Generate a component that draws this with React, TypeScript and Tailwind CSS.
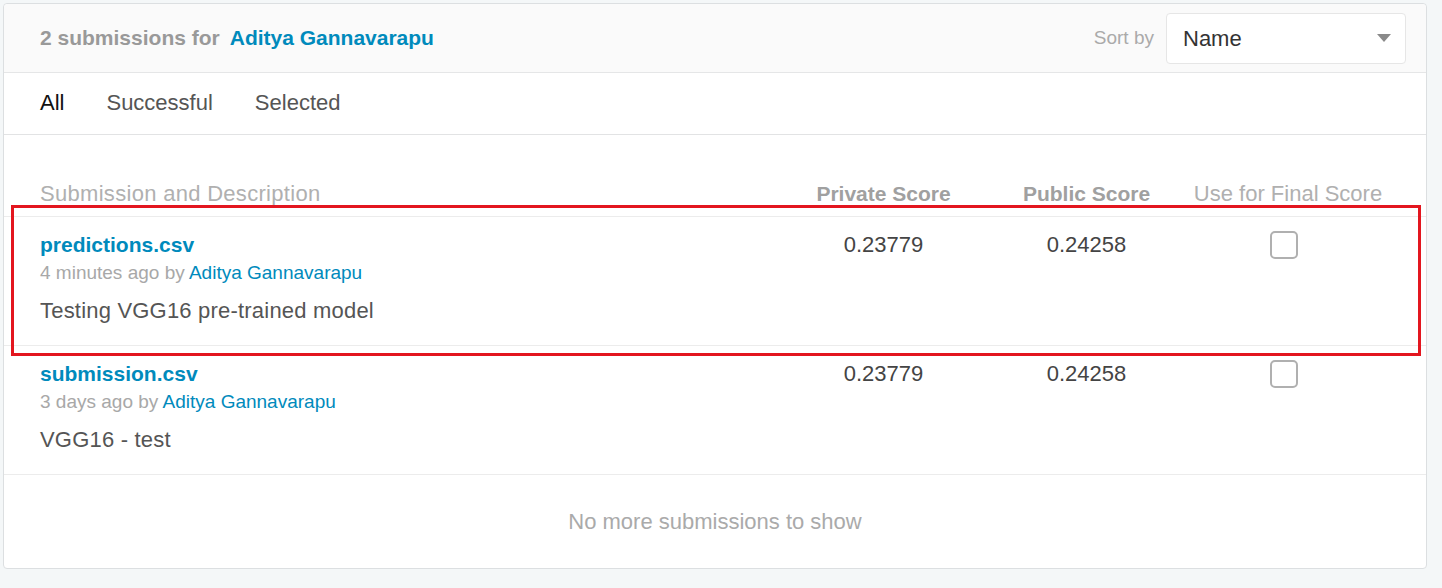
const font = { fontFamily: '"Liberation Sans", Arial, sans-serif' };

type Submission = {
  file: string;
  when: string;
  author: string;
  description: string;
  privateScore: string;
  publicScore: string;
};

const submissions: Submission[] = [
  {
    file: 'predictions.csv',
    when: '4 minutes ago',
    author: 'Aditya Gannavarapu',
    description: 'Testing VGG16 pre-trained model',
    privateScore: '0.23779',
    publicScore: '0.24258',
  },
  {
    file: 'submission.csv',
    when: '3 days ago',
    author: 'Aditya Gannavarapu',
    description: 'VGG16 - test',
    privateScore: '0.23779',
    publicScore: '0.24258',
  },
];

const SubmissionRow = ({ s }: { s: Submission }) => (
  <div className="flex border-t border-[#ececec] pl-9 pr-[38px] pt-[14px] pb-[20px]">
    <div className="flex-1">
      <div className="text-[21px] leading-[28px] font-bold text-[#008abc]">{s.file}</div>
      <div className="text-[19px] leading-[28px] text-[#a8a8a8]">
        {s.when} by <span className="text-[#008abc]">{s.author}</span>
      </div>
      <div className="mt-[10px] text-[22px] leading-[28px] tracking-[0.2px] text-[#555]">{s.description}</div>
    </div>
    <div className="w-[203px] text-center text-[22px] leading-[28px] text-[#444]">
      {s.privateScore}
    </div>
    <div className="w-[203px] text-center text-[22px] leading-[28px] text-[#444]">
      {s.publicScore}
    </div>
    <div className="flex w-[200px] justify-center pr-2">
      <div className="h-[28px] w-[28px] rounded-[5px] border-2 border-[#b0b0b0] bg-white" />
    </div>
  </div>
);

export default function App() {
  return (
    <div className="min-h-[588px] bg-[#f4f7f8] pl-[3px] pt-[3px] pr-[15px]" style={font}>
      <div className="relative w-[1424px] rounded-[4px] border border-[#dcdfe1] bg-white">
        {/* header */}
        <div className="flex h-[69px] items-center justify-between rounded-t-[4px] border-b border-[#e5e6e7] bg-[#fafafa] pl-9 pr-5">
          <div className="text-[21px] font-bold">
            <span className="text-[#999]">2 submissions for</span>
            <span className="ml-[10px] text-[#008abc]">Aditya Gannavarapu</span>
          </div>
          <div className="flex items-center gap-3">
            <span className="text-[19px] text-[#aaa]">Sort by</span>
            <div className="flex h-[51px] w-[240px] items-center justify-between rounded-[4px] border border-[#e6e6e6] bg-white pl-4 pr-[14px]">
              <span className="text-[22px] text-[#333]">Name</span>
              <svg width="14" height="8" viewBox="0 0 14 8">
                <path d="M0 0h14L7 8z" fill="#8a8a8a" />
              </svg>
            </div>
          </div>
        </div>

        {/* tabs */}
        <div className="flex h-[62px] items-center gap-[42px] border-b border-[#e2e3e4] pl-9 pb-[2px] text-[22px]">
          <span className="text-[#111]">All</span>
          <span className="text-[#555]">Successful</span>
          <span className="text-[#555]">Selected</span>
        </div>

        {/* column headers */}
        <div className="flex pl-9 pr-[38px] pt-[45px] pb-[8px] leading-[28px]">
          <div className="flex-1 text-[22px] tracking-[0.3px] text-[#b0b0b0]">Submission and Description</div>
          <div className="w-[203px] text-center text-[21px] font-bold text-[#a0a0a0]">Private Score</div>
          <div className="w-[203px] text-center text-[21px] font-bold text-[#a0a0a0]">Public Score</div>
          <div className="w-[200px] text-center text-[22px] text-[#b0b0b0]">Use for Final Score</div>
        </div>

        {submissions.map((s) => (
          <SubmissionRow key={s.file} s={s} />
        ))}

        <div className="flex h-[94px] items-center justify-center border-t border-[#ececec] text-[22px] text-[#aaa]">
          No more submissions to show
        </div>

        {/* annotation */}
        <div className="pointer-events-none absolute left-[7px] top-[201px] h-[151px] w-[1410px] border-[3px] border-[#e3161f]" />
      </div>
    </div>
  );
}
